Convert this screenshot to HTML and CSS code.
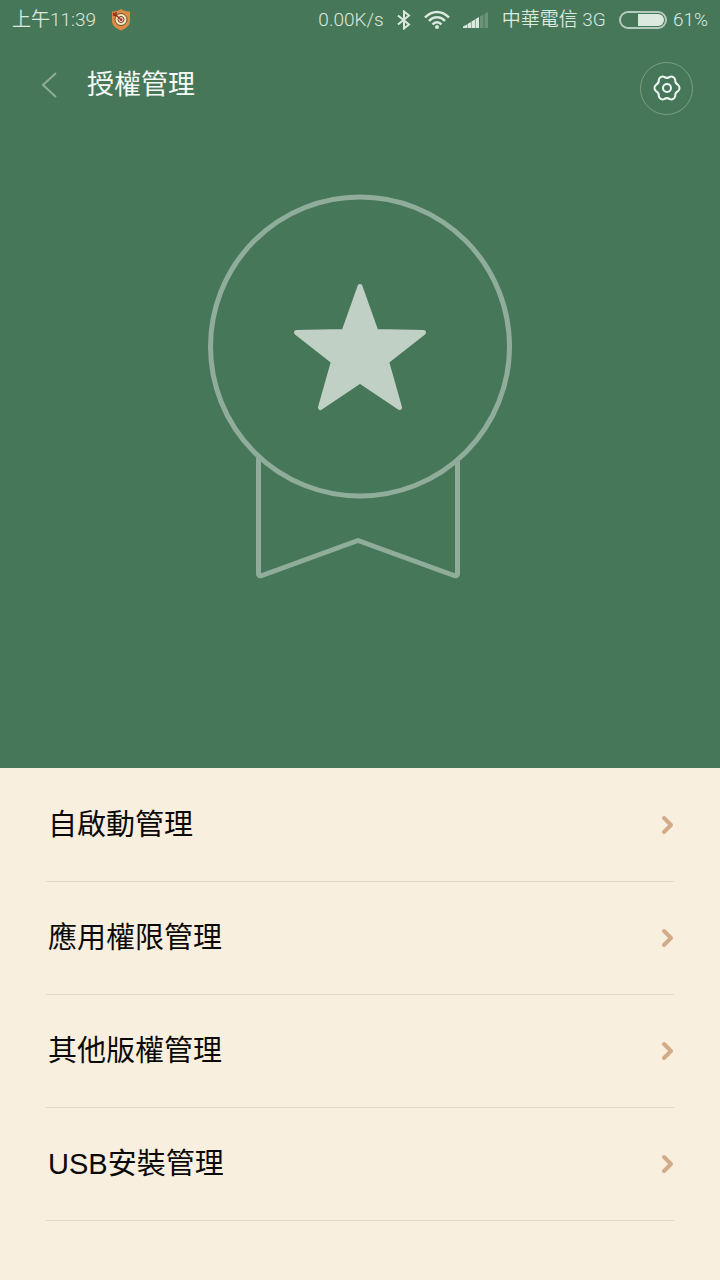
FILE: index.html
```html
<!DOCTYPE html>
<html lang="zh-Hant">
<head>
    <meta charset="UTF-8">
    <meta name="viewport" content="width=device-width, initial-scale=1.0">
    <title>授權管理</title>
    <link rel="stylesheet" href="styles.css">
</head>
<body>

    <div class="hero">
        <!-- Status bar -->
        <div class="status-bar">
            <div class="status-group">
                <span>上午11:39</span>
                <svg class="shield" width="20" height="22" viewBox="0 0 20 22">
                    <path d="M10 0 C7 2 4 2.500 1 2.500 V12 C1 17 6 20 10 21.500 C14 20 19 17 19 12 V2.500 C16 2.500 13 2 10 0 Z" fill="#dc8a45"/>
                    <circle cx="10" cy="10.500" r="6" fill="#f6e8b8" stroke="#6b4a2c"/>
                    <circle cx="10" cy="10.500" r="3" fill="#f6f0e0" stroke="#5a3b28"/>
                    <circle cx="10" cy="10.500" r="1.500" fill="#b8322c"/>
                    <path d="M2 4 L9 9.500 M2 6 L5 6.500 L5 3" fill="none" stroke="#9c2f20" stroke-width="1.500"/>
                </svg>
            </div>
            <div class="status-group">
                <span>0.00K/s</span>
                <svg width="14" height="20" viewBox="0 0 14 20" fill="none" stroke="#dbe9df" stroke-width="2">
                    <path d="M1 5.500 L12 14.500 L7 18.500 V1.500 L12 5.500 L1 14.500"/>
                </svg>
                <svg width="26" height="20" viewBox="0 0 26 20" fill="none" stroke="#dbe9df" stroke-width="2.500">
                    <path d="M1 7.500 C8 0 18 0 25 7.500"/>
                    <path d="M5 11 C9.500 6 16.500 6 21 11"/>
                    <path d="M8.500 14.500 C11 11.500 15 11.500 17.500 14.500"/>
                    <circle cx="13" cy="17" r="2" fill="#dbe9df" stroke="none"/>
                </svg>
                <svg width="26" height="16" viewBox="0 0 26 16" fill="#dbe9df">
                    <path d="M0 16 V14.500 L4 12.500 V16 Z"/>
                    <path d="M4.500 16 V12 L8 10 V16 Z"/>
                    <path d="M8.500 16 V9.500 L12 7.500 V16 Z"/>
                    <path d="M12.500 16 V7 L16 5 V16 Z"/>
                    <path d="M17 16 V4.500 L20.500 2.500 V16 Z M21.500 16 V2 L25 0 V16 Z" opacity="0.25"/>
                </svg>
                <span>中華電信 3G</span>
                <div class="battery-group">
                    <div class="battery"><div class="battery-level"></div></div>
                    <span>61%</span>
                </div>
            </div>
        </div>

        <!-- Title bar -->
        <header class="title-bar">
            <button class="back" type="button" aria-label="返回">
                <svg width="16" height="28" viewBox="0 0 16 28" fill="none" stroke="#8fad9a" stroke-width="2">
                    <path d="M15 2 L2 14 L15 26"/>
                </svg>
            </button>
            <h1>授權管理</h1>
            <button class="settings" type="button" aria-label="設定">
                <svg width="28" height="28" viewBox="-14 -14 28 28" fill="none" stroke="#f0f7f2" stroke-width="2" stroke-linejoin="round">
                    <path d="M11.080 -3.060 A4 4 0 0 1 11.080 3.060 A5 5 0 0 0 8.190 8.070 A4 4 0 0 1 2.890 11.130 A5 5 0 0 0 -2.890 11.130 A4 4 0 0 1 -8.190 8.070 A5 5 0 0 0 -11.080 3.060 A4 4 0 0 1 -11.080 -3.060 A5 5 0 0 0 -8.190 -8.070 A4 4 0 0 1 -2.890 -11.130 A5 5 0 0 0 2.890 -11.130 A4 4 0 0 1 8.190 -8.070 A5 5 0 0 0 11.080 -3.060 Z"/>
                    <circle r="4"/>
                </svg>
            </button>
        </header>

        <!-- Medal -->
        <svg class="medal" width="304" height="386" viewBox="0 0 304 386">
            <g fill="none" stroke="#8fad9a" stroke-width="5" stroke-linejoin="round">
                <circle cx="152" cy="152.500" r="149.500"/>
                <path d="M50.500 264 V380 Q50.500 382.500 54 381.500 L150 346.500 L246 381.500 Q249.500 382.500 249.500 380 V266"/>
            </g>
            <path d="M152 92.500 L168 137.500 L215.500 138.500 L178.500 167.500 L191.500 213.500 L152 187 L112.500 213.500 L125.500 167.500 L88.500 138.500 L136 137.500 Z" fill="#c0d0c5" stroke="#c0d0c5" stroke-width="5" stroke-linejoin="round"/>
        </svg>
    </div>

    <nav class="menu">
        <a href="#autostart">
            <span>自啟動管理</span>
            <svg width="14" height="20" viewBox="0 0 14 20"><path d="M4 3 L11 10 L4 17"/></svg>
        </a>
        <a href="#permissions">
            <span>應用權限管理</span>
            <svg width="14" height="20" viewBox="0 0 14 20"><path d="M4 3 L11 10 L4 17"/></svg>
        </a>
        <a href="#other">
            <span>其他版權管理</span>
            <svg width="14" height="20" viewBox="0 0 14 20"><path d="M4 3 L11 10 L4 17"/></svg>
        </a>
        <a href="#usb">
            <span>USB安裝管理</span>
            <svg width="14" height="20" viewBox="0 0 14 20"><path d="M4 3 L11 10 L4 17"/></svg>
        </a>
    </nav>

</body>
</html>
```
FILE: styles.css
```css
* {
    box-sizing: border-box;
}
body {
    margin: 0;
    min-height: 100vh;
    background-color: #f8efdf;
    font-family: "Liberation Sans", "Noto Sans CJK TC", sans-serif;
}
button {
    padding: 0;
    border: 0;
    background: none;
    display: flex;
    align-items: center;
    justify-content: center;
}
.hero {
    display: flex;
    flex-direction: column;
    padding-bottom: 188px;
    background-color: #477759;
}

/* Status bar */
.status-bar {
    display: flex;
    justify-content: space-between;
    align-items: center;
    height: 40px;
    padding: 0 12px;
    color: #dbe9df;
    font-family: Roboto, "Noto Sans CJK TC", sans-serif;
    font-size: 19px;
    font-weight: 350;
    line-height: 24px;
    white-space: nowrap;
}
.status-group {
    display: flex;
    align-items: center;
    gap: 13px;
}
.shield {
    margin-left: 2px;
}
.battery-group {
    display: flex;
    align-items: center;
    gap: 6px;
}
.battery {
    display: flex;
    justify-content: flex-end;
    width: 48px;
    height: 18px;
    padding: 1px;
    border: 2px solid #b5cabc;
    border-radius: 9px;
}
.battery-level {
    width: 61%;
    background-color: #dbe9df;
    border-radius: 0 6px 6px 0;
}

/* Title bar */
.title-bar {
    display: flex;
    align-items: center;
    height: 96px;
    padding: 0 27px 0 28px;
}
.back {
    width: 42px;
    height: 52px;
    margin-bottom: 6px;
}
h1 {
    flex: 1;
    margin: 0 0 6px 17px;
    color: #f5faf6;
    font-size: 27px;
    font-weight: 400;
    line-height: 40px;
}
.settings {
    width: 53px;
    height: 53px;
    border: 1px solid #78a086;
    border-radius: 50%;
}
.medal {
    align-self: center;
    margin-top: 58px;
}

/* Menu list */
.menu {
    padding: 1px 46px 0;
}
.menu a {
    display: flex;
    align-items: center;
    justify-content: space-between;
    height: 113px;
    padding-left: 2px;
    border-bottom: 1px solid #e2d8c9;
    color: #0c0a08;
    font-size: 29px;
    line-height: 40px;
    text-decoration: none;
}
.menu svg {
    fill: none;
    stroke: #d2ab88;
    stroke-width: 4;
    stroke-linecap: round;
    stroke-linejoin: round;
}
```
